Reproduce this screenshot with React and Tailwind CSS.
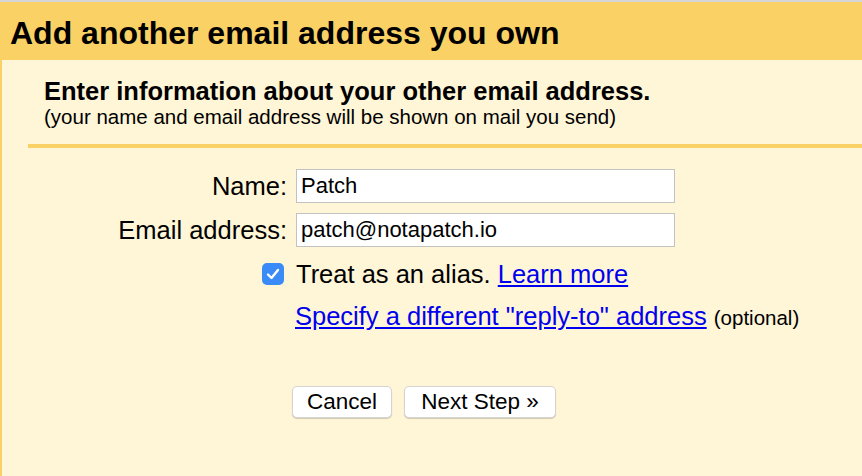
import React, { useState } from 'react';

const Row = ({ label, children, className = '' }) => (
  <div className={`flex items-center ${className}`}>
    <div className="w-[259px] shrink-0 text-right text-[25.5px] leading-[30px]">{label}</div>
    <div className="ml-[9px] flex items-center">{children}</div>
  </div>
);

const App = () => {
  const [form, setForm] = useState({ name: 'Patch', email: 'patch@notapatch.io' });
  const [alias, setAlias] = useState(true);

  const handleChange = (e) => setForm({ ...form, [e.target.name]: e.target.value });

  return (
    <div className="min-h-screen w-[862px] h-[476px] overflow-hidden bg-[#fff5d7] text-black font-['Liberation_Sans',Arial,sans-serif]">
      <div className="h-[2px] bg-[#d6d6d6]" />
      <div className="h-[58px] bg-[#fad165] flex items-center px-[10px] pt-[4px]">
        <h1 className="text-[32px] font-bold leading-[36px]">Add another email address you own</h1>
      </div>

      <div className="border-l-[2px] border-[#fad165] h-[416px]">
        <div className="pl-[42px] pt-[17px]">
          <h2 className="text-[25.5px] font-bold leading-[28px]">Enter information about your other email address.</h2>
          <p className="text-[20.5px] leading-[24px]">(your name and email address will be shown on mail you send)</p>
        </div>
        <div className="ml-[26px] mt-[15px] h-[4px] bg-[#fad165]" />

        <div className="pl-[26px] mt-[21px]">
          <Row label="Name:">
            <input
              name="name"
              value={form.name}
              onChange={handleChange}
              className="w-[379px] h-[34px] bg-white border border-[#c2c2c2] pl-[4px] text-[22px] outline-none"
            />
          </Row>
          <Row label="Email address:" className="mt-[10px]">
            <input
              name="email"
              value={form.email}
              onChange={handleChange}
              className="w-[379px] h-[34px] bg-white border border-[#c2c2c2] pl-[4px] text-[22px] outline-none"
            />
          </Row>

          <div className="flex items-center mt-[11px] h-[32px]">
            <div className="w-[259px] shrink-0 flex justify-end pr-[3px]">
              <button
                onClick={() => setAlias(!alias)}
                className={`w-[22px] h-[22px] rounded-[5px] flex items-center justify-center ${alias ? 'bg-[#3a8bf7]' : 'bg-white border border-gray-400'}`}
              >
                {alias && (
                  <svg width="14" height="12" viewBox="0 0 14 12" fill="none">
                    <path d="M2 6.5 L5.5 10 L12 2" stroke="white" strokeWidth="2.4" strokeLinecap="round" strokeLinejoin="round" />
                  </svg>
                )}
              </button>
            </div>
            <div className="ml-[9px] text-[25.5px] leading-[30px]">
              Treat as an alias. <a href="#" className="text-[#0000ee] underline">Learn more</a>
            </div>
          </div>

          <div className="flex items-center mt-[11px] h-[32px]">
            <div className="w-[259px] shrink-0" />
            <div className="ml-[8px] text-[25.5px] leading-[30px]">
              <a href="#" className="text-[#0000ee] underline">Specify a different "reply-to" address</a>{' '}
              <span className="text-[20.5px]">(optional)</span>
            </div>
          </div>

          <div className="flex items-center mt-[53px]">
            <div className="w-[259px] shrink-0" />
            <div className="ml-[5px] flex gap-[12px]">
              <button className="w-[100px] h-[32px] bg-white border border-[#d4d4d4] rounded-[5px] shadow-[0_1px_1px_rgba(0,0,0,0.18)] text-[22.5px] leading-[30px]">
                Cancel
              </button>
              <button className="w-[152px] h-[32px] bg-white border border-[#d4d4d4] rounded-[5px] shadow-[0_1px_1px_rgba(0,0,0,0.18)] text-[22.5px] leading-[30px]">
                Next Step »
              </button>
            </div>
          </div>
        </div>
      </div>
    </div>
  );
};

export default App;
